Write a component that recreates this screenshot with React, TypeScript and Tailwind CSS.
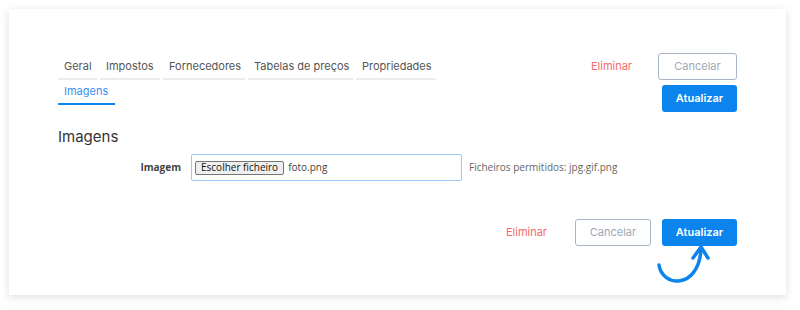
import React from "react";

const tabs = [
  { name: "Geral", w: "w-[39px]" },
  { name: "Impostos", w: "w-[60px]" },
  { name: "Fornecedores", w: "w-[82px]" },
  { name: "Tabelas de preços", w: "w-[105px]" },
  { name: "Propriedades", w: "w-[80px]" },
  { name: "Imagens", w: "w-[57px]" },
];

export default function App() {
  const active = "Imagens";

  return (
    <div className="w-[800px] h-[310px] bg-white pt-[9px] pl-[9px] font-['Inter','Noto_Sans',sans-serif]">
      <div className="relative w-[777px] h-[286px] bg-white shadow-[0_2px_8px_rgba(40,50,80,0.16)] pt-[44px] px-[49px]">
        {/* Tabs + top actions */}
        <div className="flex justify-between items-start">
          <div className="flex flex-wrap w-[390px] mt-[2px]">
            {tabs.map((t) => (
              <div
                key={t.name}
                className={`${t.w} h-[25px] mr-[3px] px-[6px] flex items-center whitespace-nowrap text-[11px] border-b-2 ${
                  t.name === active ? "border-[#0b84ee] text-[#3d8ff2]" : "border-[#ececec] text-[#555]"
                }`}
              >
                {t.name}
              </div>
            ))}
          </div>
          <div className="flex flex-col items-end">
            <div className="flex items-center">
              <span className="text-[11px] text-[#f26b6b] mr-[26px]">Eliminar</span>
              <button className="w-[79px] h-[27px] border border-[#aab4c8] rounded-[3px] text-[11px] text-[#a0a8b8] bg-white">
                Cancelar
              </button>
            </div>
            <button className="mt-[5px] w-[75px] h-[27px] rounded-[3px] bg-[#0b84ee] text-white text-[11px] font-semibold">
              Atualizar
            </button>
          </div>
        </div>

        {/* Section */}
        <h2 className="mt-[15px] text-[15px] text-[#333] leading-[20px]">Imagens</h2>

        <div className="flex items-center mt-[7px] font-['Open_Sans','Noto_Sans',sans-serif]">
          <label className="w-[123px] text-right text-[10px] font-bold text-[#444]">Imagem</label>
          <div className="ml-[10px] w-[271px] h-[27px] border border-[#9ec9f5] rounded-[2px] flex items-center px-[3px]">
            <span className="h-[14px] px-[5px] flex items-center bg-[#efefef] border border-[#767676] rounded-[2px] text-[10px] text-[#111]">
              Escolher ficheiro
            </span>
            <span className="ml-[4px] text-[10px] text-[#444]">foto.png</span>
          </div>
          <span className="ml-[7px] text-[10px] text-[#666]">Ficheiros permitidos: jpg.gif.png</span>
        </div>

        {/* Bottom actions */}
        <div className="flex justify-end items-center mt-[38px]">
          <span className="text-[11px] text-[#f26b6b] mr-[28px]">Eliminar</span>
          <button className="w-[76px] h-[27px] border border-[#aab4c8] rounded-[3px] text-[11px] text-[#a0a8b8] bg-white">
            Cancelar
          </button>
          <button className="ml-[11px] w-[75px] h-[27px] rounded-[3px] bg-[#0b84ee] text-white text-[11px] font-semibold">
            Atualizar
          </button>
        </div>

        {/* Curved pointer arrow */}
        <svg
          className="absolute left-[641px] top-[231px]"
          width="70"
          height="60"
          viewBox="0 0 70 60"
          fill="none"
          stroke="#0b84ee"
          strokeWidth="3.5"
          strokeLinecap="round"
          strokeLinejoin="round"
        >
          <path d="M9 25 C 12 47, 48 50, 51 10" />
          <path d="M43 18 L51 7 L58 18" />
        </svg>
      </div>
    </div>
  );
}
